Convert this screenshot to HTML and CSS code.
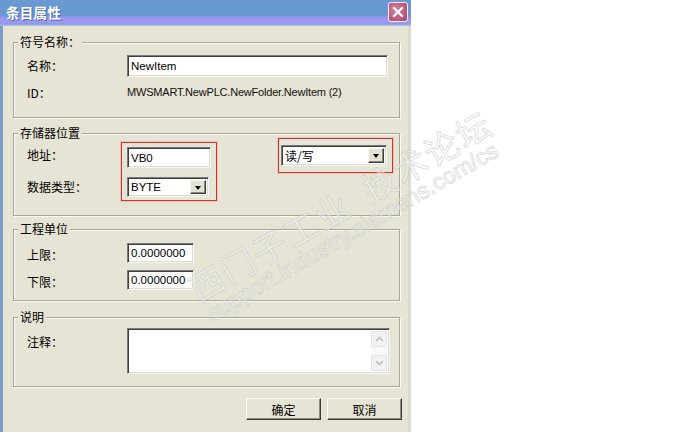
FILE: index.html
```html
<!DOCTYPE html>
<html lang="zh-CN">
<head>
<meta charset="utf-8">
<title>条目属性</title>
<link rel="stylesheet" href="styles.css">
</head>
<body>
<div class="page">
  <div class="dialog">
    <div class="titlebar">
      <span class="title">条目属性</span>
      <div class="close" aria-label="关闭">
        <svg width="20" height="20" viewBox="0 0 20 20">
          <path d="M6 6 L14 14 M14 6 L6 14" stroke="#fff" stroke-width="2.2" stroke-linecap="square" fill="none"/>
        </svg>
      </div>
    </div>
    <div class="content">
      <div class="group g1">
        <span class="legend">符号名称：</span>
        <div class="form">
          <span class="label">名称：</span>
          <div class="field name">NewItem</div>
          <span class="label">ID：</span>
          <span class="value">MWSMART.NewPLC.NewFolder.NewItem (2)</span>
        </div>
      </div>

      <div class="group g2">
        <span class="legend">存储器位置</span>
        <div class="labels">
          <span class="label addr">地址：</span>
          <span class="label dtype">数据类型：</span>
        </div>
        <div class="mark mark-left">
          <div class="field addr-field">VB0</div>
          <div class="combo byte">
            <span class="combo-text">BYTE</span>
            <span class="arrow"><i></i></span>
          </div>
        </div>
        <div class="mark mark-right">
          <div class="combo access">
            <span class="combo-text">读/写</span>
            <span class="arrow"><i></i></span>
          </div>
        </div>
      </div>

      <div class="group g3">
        <span class="legend">工程单位</span>
        <div class="form form3">
          <span class="label">上限：</span>
          <div class="field num">0.0000000</div>
          <span class="label">下限：</span>
          <div class="field num">0.0000000</div>
        </div>
      </div>

      <div class="group g4">
        <span class="legend">说明</span>
        <div class="form form4">
          <span class="label note">注释：</span>
          <div class="field memo">
            <div class="memo-text"></div>
            <div class="scroll">
              <span class="sbtn"><svg width="9" height="6" viewBox="0 0 9 6"><path d="M1 5 L4.5 1.5 L8 5" stroke="#b9bcc8" stroke-width="1.6" fill="none"/></svg></span>
              <span class="strack"></span>
              <span class="sbtn"><svg width="9" height="6" viewBox="0 0 9 6"><path d="M1 1 L4.5 4.5 L8 1" stroke="#b9bcc8" stroke-width="1.6" fill="none"/></svg></span>
            </div>
          </div>
        </div>
      </div>

      <div class="buttons">
        <button class="btn">确定</button>
        <button class="btn">取消</button>
      </div>
    </div>
  </div>

  <div class="watermark" aria-hidden="true">
    <span class="wm-cn">西门子工业&nbsp;&nbsp;技术论坛</span>
    <span class="wm-url">support.industry.siemens.com/cs</span>
  </div>
</div>
</body>
</html>
```

FILE: styles.css
```css
* { box-sizing: border-box; }

html, body {
  margin: 0;
  padding: 0;
  background: #ffffff;
}

body {
  font-family: "Noto Sans CJK SC", "Liberation Sans", sans-serif;
  font-size: 12px;
  color: #000;
}

.page {
  position: relative;
  width: 683px;
  height: 432px;
  overflow: hidden;
}

.dialog {
  width: 411px;
  height: 432px;
  display: flex;
  flex-direction: column;
  background: #e6e4d4;
}

.titlebar {
  height: 26px;
  flex: none;
  display: flex;
  align-items: flex-start;
  justify-content: space-between;
  background: linear-gradient(to bottom,
    #6b9ad2 0px, #6697cf 15px, #8f92ea 17px, #9c98f1 19px, #9c98f1 23px, #7c9fd8 24px, #b9c9e6 26px);
}

.title {
  margin: 4px 0 0 6px;
  color: #ffffff;
  font-weight: bold;
  font-size: 13.5px;
  line-height: 16px;
  letter-spacing: 0.3px;
  text-shadow: 1px 1px 0 #4a6fa8;
}

.close {
  width: 20px;
  height: 20px;
  margin: 2px 3px 0 0;
  border: 1px solid #f3eef2;
  border-radius: 3px;
  background: radial-gradient(circle at 40% 40%, #d48aa8 0%, #c25a80 55%, #a34468 100%);
  display: flex;
  align-items: center;
  justify-content: center;
}

.close svg { display: block; margin: -1px; }

.content {
  flex: 1;
  display: flex;
  flex-direction: column;
  border-left: 3px solid #7e9cc8;
  border-right: 3px solid #dcdacb;
  padding: 0 8px 0 10px;
}

.group {
  position: relative;
  border: 1px solid #a7a696;
  box-shadow: 1px 1px 0 #fbfbf6, inset 1px 1px 0 #fbfbf6;
  padding-left: 13px;
}

.legend {
  position: absolute;
  top: -8px;
  left: 4px;
  padding: 0 2px;
  background: #e6e4d4;
  line-height: 14px;
  font-size: 12px;
}

.label {
  line-height: 14px;
  font-size: 12px;
  white-space: nowrap;
}

.form {
  display: grid;
  grid-template-columns: 100px auto;
  align-items: center;
  justify-content: start;
}

/* group 1 */
.g1 {
  margin-top: 16px;
  height: 76px;
  padding-top: 12px;
}
.g1 .form {
  grid-template-rows: 22px 22px;
  row-gap: 5px;
}

.field {
  background: #ffffff;
  border: 1px solid;
  border-color: #7a7a7a #f6f6f2 #f6f6f2 #7a7a7a;
  box-shadow: inset 1px 1px 0 #3f3f3f, inset -1px -1px 0 #dedcd0;
  font-family: "Liberation Sans", "Noto Sans CJK SC", sans-serif;
  font-size: 11.5px;
  padding: 0 0 0 3px;
  display: flex;
  align-items: center;
}

.name {
  width: 261px;
  height: 22px;
}

.value {
  font-family: "Liberation Sans", sans-serif;
  font-size: 11px;
  letter-spacing: -0.2px;
  color: #111;
  white-space: nowrap;
  margin-top: -3px;
}

/* group 2 */
.g2 {
  margin-top: 15px;
  height: 83px;
  padding-top: 4px;
  display: flex;
  align-items: flex-start;
}

.labels {
  width: 94px;
  display: flex;
  flex-direction: column;
  padding-top: 10px;
  row-gap: 18px;
}

.mark {
  border: 1px solid #d6302e;
  box-shadow: 0 0 0 1px rgba(236, 150, 140, 0.35);
}

.mark-left {
  margin-top: 4px;
  padding: 4px 5px 3px 5px;
  display: flex;
  flex-direction: column;
  row-gap: 9px;
}

.addr-field {
  width: 84px;
  height: 21px;
}

.combo {
  background: #ffffff;
  border: 1px solid;
  border-color: #7a7a7a #f6f6f2 #f6f6f2 #7a7a7a;
  box-shadow: inset 1px 1px 0 #3f3f3f, inset -1px -1px 0 #dedcd0;
  display: flex;
  align-items: stretch;
  padding: 2px 2px 2px 2px;
}

.combo-text {
  flex: 1;
  display: flex;
  align-items: center;
  padding-left: 1px;
  font-family: "Liberation Sans", "Noto Sans CJK SC", sans-serif;
  font-size: 11.5px;
}

.access .combo-text {
  font-family: "Noto Sans CJK SC", sans-serif;
  font-size: 12px;
}

.arrow {
  width: 16px;
  background: #e4e2d4;
  border: 1px solid;
  border-color: #f7f6f0 #3c3c3c #3c3c3c #f7f6f0;
  box-shadow: inset -1px -1px 0 #8a8a80;
  display: flex;
  align-items: center;
  justify-content: center;
}

.arrow i {
  display: block;
  width: 0;
  height: 0;
  border-left: 3.5px solid transparent;
  border-right: 3.5px solid transparent;
  border-top: 4px solid #000;
  margin-top: 1px;
}

.byte {
  width: 82px;
  height: 20px;
}

.mark-right {
  margin-left: auto;
  margin-right: 6px;
  padding: 6px 5px 6px 2px;
}

.access {
  width: 106px;
  height: 21px;
}

/* group 3 */
.g3 {
  margin-top: 13px;
  height: 72px;
  padding-top: 13px;
}

.form3 {
  grid-template-rows: 20px 20px;
  row-gap: 7px;
}

.num {
  width: 67px;
  height: 20px;
}

.form3 .label { margin-top: 3px; }

/* group 4 */
.g4 {
  margin-top: 16px;
  height: 70px;
  padding-top: 10px;
}

.form4 {
  align-items: start;
}

.note { margin-top: 7px; }

.memo {
  width: 263px;
  height: 46px;
  padding: 2px 2px 2px 2px;
  align-items: stretch;
}

.memo-text { flex: 1; }

.scroll {
  width: 16px;
  display: flex;
  flex-direction: column;
  background: #f8f8f6;
}

.sbtn {
  height: 16px;
  border: 1px solid #e2e3ea;
  border-radius: 2px;
  background: #f1f1f0;
  display: flex;
  align-items: center;
  justify-content: center;
}

.strack { flex: 1; }

/* buttons */
.buttons {
  margin-top: 11px;
  margin-right: -2px;
  display: flex;
  justify-content: flex-end;
  column-gap: 6px;
}

.btn {
  width: 75px;
  height: 22px;
  padding: 0;
  margin: 0;
  background: #e6e4d4;
  border: 1px solid;
  border-color: #fbfbf6 #3a3a36 #3a3a36 #fbfbf6;
  box-shadow: inset -1px -1px 0 #8c8b80;
  font-family: "Noto Sans CJK SC", sans-serif;
  font-size: 12px;
  color: #000;
}

/* watermark overlay */
.watermark {
  position: absolute;
  inset: 0;
  pointer-events: none;
}

.wm-cn,
.wm-url {
  position: absolute;
  white-space: nowrap;
  transform: translate(-50%, -50%) rotate(-30deg);
  color: rgba(255, 255, 255, 0.4);
  -webkit-text-stroke: 1px rgba(200, 200, 200, 0.6);
}

.wm-cn {
  left: 340px;
  top: 205px;
  font-family: "Noto Sans CJK SC", sans-serif;
  font-size: 34px;
  letter-spacing: 2px;
}

.wm-url {
  left: 352px;
  top: 232px;
  font-family: "Liberation Sans", sans-serif;
  font-size: 23px;
}
```
